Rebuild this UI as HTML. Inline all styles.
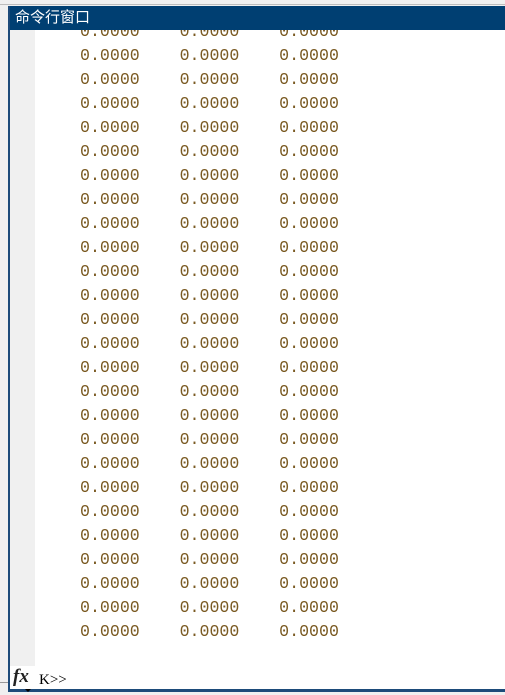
<!DOCTYPE html>
<html><head><meta charset="utf-8"><style>
body{margin:0;width:505px;height:695px;background:#f0f0f0;position:relative;overflow:hidden}
.top{position:absolute;left:0;top:0;width:505px;height:4px;background:#f0f0f0;border-bottom:1px solid #bdbdbd}
.win{position:absolute;left:8px;top:6px;width:497px;height:686px;background:#fff;border-left:2px solid #1d4b7a;border-bottom:3px solid #1d4b7a;box-sizing:border-box}
.title{position:absolute;left:0;top:0;right:0;height:24px;background:#003f72;color:#fff;font:15px "Liberation Sans","Noto Sans CJK SC",sans-serif;line-height:24px;padding-left:5px}
.gut{position:absolute;left:0;top:24px;width:25px;height:636px;background:#f0f0f0}
.rows{position:absolute;left:0;top:24px;right:0;height:636px;overflow:hidden}
.r{position:absolute;font:16.6px "Liberation Mono",monospace;color:#7a5a22;white-space:pre;left:70px}
.fx{position:absolute;left:3px;top:660px;font:italic bold 19px "Liberation Serif",serif;color:#222}
.k{position:absolute;left:29px;top:666px;font:15px "Liberation Serif",serif;color:#000}
.side{position:absolute;left:0;top:682px;width:8px;height:1px;background:#999}
</style></head><body>
<div class="top"></div>
<div class="side"></div>
<div class="win">
<div class="title">命令行窗口</div>
<div class="gut"></div>
<div class="rows">
<div class="r" style="top:-8px">0.0000    0.0000    0.0000</div>
<div class="r" style="top:16px">0.0000    0.0000    0.0000</div>
<div class="r" style="top:40px">0.0000    0.0000    0.0000</div>
<div class="r" style="top:64px">0.0000    0.0000    0.0000</div>
<div class="r" style="top:88px">0.0000    0.0000    0.0000</div>
<div class="r" style="top:112px">0.0000    0.0000    0.0000</div>
<div class="r" style="top:136px">0.0000    0.0000    0.0000</div>
<div class="r" style="top:160px">0.0000    0.0000    0.0000</div>
<div class="r" style="top:184px">0.0000    0.0000    0.0000</div>
<div class="r" style="top:208px">0.0000    0.0000    0.0000</div>
<div class="r" style="top:232px">0.0000    0.0000    0.0000</div>
<div class="r" style="top:256px">0.0000    0.0000    0.0000</div>
<div class="r" style="top:280px">0.0000    0.0000    0.0000</div>
<div class="r" style="top:304px">0.0000    0.0000    0.0000</div>
<div class="r" style="top:328px">0.0000    0.0000    0.0000</div>
<div class="r" style="top:352px">0.0000    0.0000    0.0000</div>
<div class="r" style="top:376px">0.0000    0.0000    0.0000</div>
<div class="r" style="top:400px">0.0000    0.0000    0.0000</div>
<div class="r" style="top:424px">0.0000    0.0000    0.0000</div>
<div class="r" style="top:448px">0.0000    0.0000    0.0000</div>
<div class="r" style="top:472px">0.0000    0.0000    0.0000</div>
<div class="r" style="top:496px">0.0000    0.0000    0.0000</div>
<div class="r" style="top:520px">0.0000    0.0000    0.0000</div>
<div class="r" style="top:544px">0.0000    0.0000    0.0000</div>
<div class="r" style="top:568px">0.0000    0.0000    0.0000</div>
<div class="r" style="top:592px">0.0000    0.0000    0.0000</div>
</div>
<div class="fx">fx</div>
<div style="position:absolute;left:15px;top:683px;width:0;height:0;border-left:3px solid transparent;border-right:3px solid transparent;border-top:3px solid #000"></div>
<div class="k">K&gt;&gt;</div>
</div>
</body></html>
